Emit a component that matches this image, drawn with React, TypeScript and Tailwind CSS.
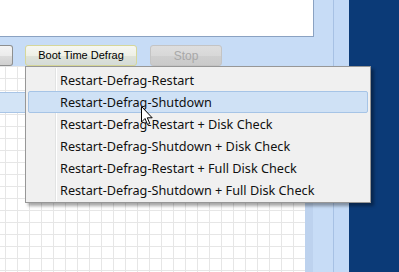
import React from "react";

const items = [
  "Restart-Defrag-Restart",
  "Restart-Defrag-Shutdown",
  "Restart-Defrag-Restart + Disk Check",
  "Restart-Defrag-Shutdown + Disk Check",
  "Restart-Defrag-Restart + Full Disk Check",
  "Restart-Defrag-Shutdown + Full Disk Check",
];

function Cursor() {
  return (
    <svg width="13" height="20" viewBox="0 0 13 20" className="absolute left-[141px] top-[106px]">
      <path
        d="M0.5 0.5 L0.5 16 L4 12.5 L6.5 18.5 L8.8 17.5 L6.3 11.8 L11.2 11.8 Z"
        fill="white"
        stroke="black"
        strokeWidth="1"
        strokeLinejoin="miter"
      />
    </svg>
  );
}

export default function App() {
  return (
    <div className="relative w-[399px] h-[272px] overflow-hidden flex font-['Noto_Sans','Liberation_Sans',sans-serif] text-black">
      {/* main area */}
      <div className="w-[333px] flex flex-col bg-[#c7dcf6]">
        <div className="flex h-[37px]">
          <div className="w-[314px] h-full bg-white border-r border-b border-[#8aa2c2]" />
        </div>
        <div className="h-[29px] flex items-start pt-[8px] gap-[12px] font-['Liberation_Sans',sans-serif]">
          <div className="w-[13px] h-[21px] rounded-r-[3px] border border-l-0 border-[#8e8f8f] bg-[linear-gradient(#f4f4f4_0%,#ebebeb_50%,#dcdcdc_51%,#d0d0d0_100%)]" />
          <div className="w-[112px] h-[21px] rounded-[3px] border border-[#d6d79a] bg-[linear-gradient(#f6f7f2_0%,#eef0e6_50%,#dfe3d8_51%,#d4dbd8_100%)] flex items-center justify-center text-[11px] leading-none">
            Boot Time Defrag
          </div>
          <div className="ml-[1px] w-[72px] h-[21px] rounded-[3px] border border-[#c4c4c4] bg-[linear-gradient(#dedede_0%,#d8d8d8_50%,#cfcfcf_51%,#cacaca_100%)] flex items-center justify-center text-[12px] leading-none text-[#a8a8a8]">
            Stop
          </div>
        </div>
        <div className="flex-1 flex">
          <div className="w-[305px] h-full relative bg-white bg-[linear-gradient(to_right,#e6e6e6_1px,transparent_1px),linear-gradient(to_bottom,#e6e6e6_1px,transparent_1px)] bg-[length:12px_12px] bg-[position:5px_0px]">
            <div className="absolute left-0 top-[26px] w-[26px] h-[21px] bg-[#d3e4f6] border border-l-0 border-[#a9c5e6]" />
          </div>
          <div className="w-[8px] h-full bg-[#bdd2ee]" />
        </div>
      </div>
      <div className="w-[1px] bg-[#a7c1e4]" />
      <div className="w-[15px] bg-[#c4daf6]" />
      <div className="flex-1 bg-[#0b3a77]" />

      {/* drop-down menu */}
      <div className="absolute left-[25px] top-[66px] w-[346px] h-[137px] bg-[#f0f0f0] border border-[#979797] shadow-[3px_3px_3px_rgba(0,0,0,0.35)] pt-[2px]">
        <div className="absolute left-[29px] top-[1px] bottom-[1px] w-[1px] bg-[#e2e3e3]" />
        <div className="absolute left-[30px] top-[1px] bottom-[1px] w-[1px] bg-white" />
        <div className="relative flex flex-col px-[2px]">
          {items.map((label, i) => (
            <div
              key={label}
              className={
                i === 1
                  ? "h-[22px] flex items-center pl-[31px] text-[12.7px] leading-none text-[#111] rounded-[2px] border border-[#a6c4e6] bg-[#cfe1f5]"
                  : "h-[22px] flex items-center pl-[31px] text-[12.7px] leading-none text-[#111] border border-transparent"
              }
            >
              {label}
            </div>
          ))}
        </div>
      </div>

      <Cursor />
    </div>
  );
}
